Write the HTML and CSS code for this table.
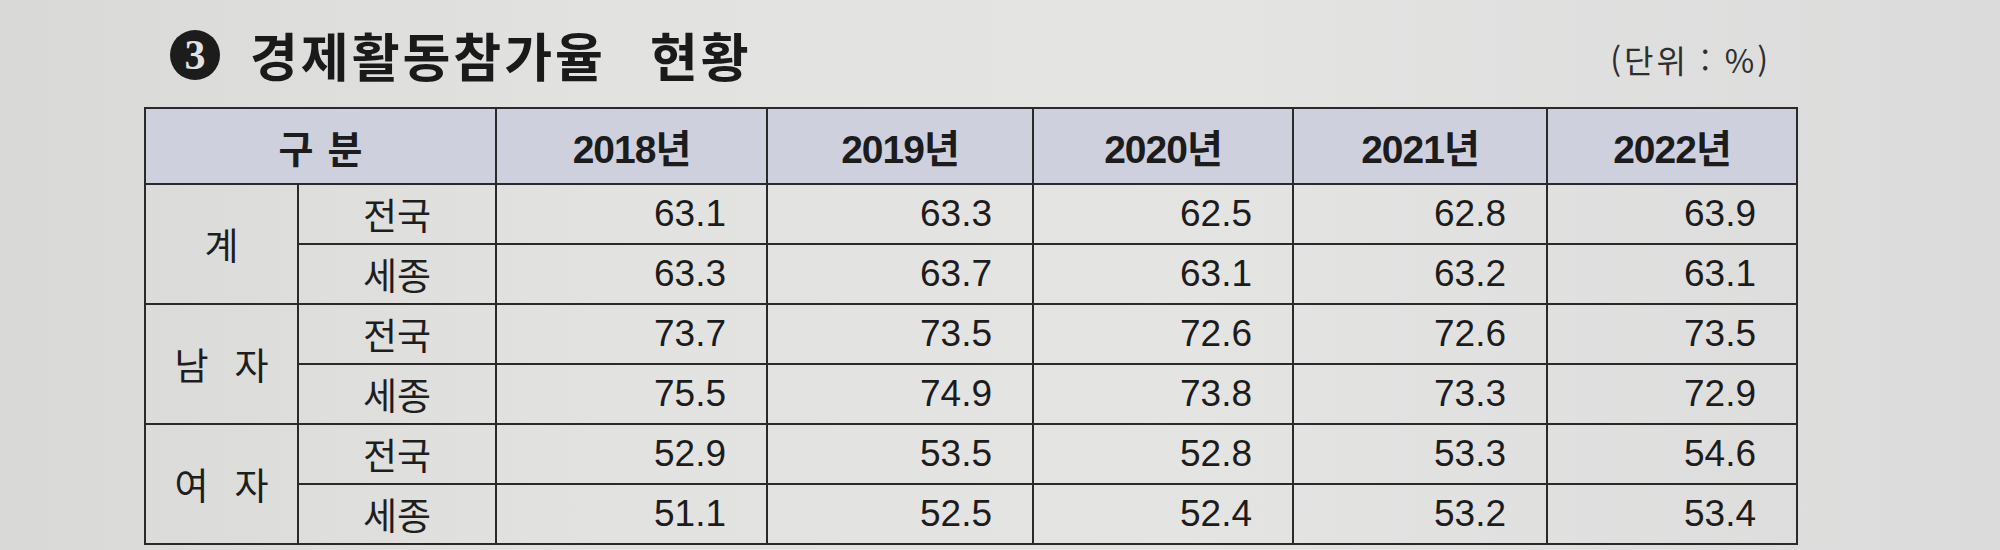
FILE: index.html
```html
<!DOCTYPE html>
<html lang="ko">
<head>
<meta charset="utf-8">
<title>경제활동참가율 현황</title>
<link rel="stylesheet" href="styles.css">
</head>
<body>
<div class="page">
  <header class="heading">
    <h1 class="title">
      <span class="num">3</span>
      <span class="word">경제활동참가율</span>
      <span class="word">현황</span>
    </h1>
    <div class="unit">(단위 : %)</div>
  </header>

  <table class="stats">
    <colgroup>
      <col class="c-group">
      <col class="c-sub">
      <col class="c-y1">
      <col class="c-y2">
      <col class="c-y3">
      <col class="c-y4">
      <col class="c-y5">
    </colgroup>
    <thead>
      <tr>
        <th colspan="2"><span class="spaced tight"><span>구</span><span>분</span></span></th>
        <th>2018년</th>
        <th>2019년</th>
        <th>2020년</th>
        <th>2021년</th>
        <th>2022년</th>
      </tr>
    </thead>
    <tbody>
      <tr>
        <td class="group" rowspan="2">계</td>
        <td class="sub">전국</td>
        <td class="val">63.1</td><td class="val">63.3</td><td class="val">62.5</td><td class="val">62.8</td><td class="val">63.9</td>
      </tr>
      <tr>
        <td class="sub">세종</td>
        <td class="val">63.3</td><td class="val">63.7</td><td class="val">63.1</td><td class="val">63.2</td><td class="val">63.1</td>
      </tr>
      <tr>
        <td class="group" rowspan="2"><span class="spaced"><span>남</span><span>자</span></span></td>
        <td class="sub">전국</td>
        <td class="val">73.7</td><td class="val">73.5</td><td class="val">72.6</td><td class="val">72.6</td><td class="val">73.5</td>
      </tr>
      <tr>
        <td class="sub">세종</td>
        <td class="val">75.5</td><td class="val">74.9</td><td class="val">73.8</td><td class="val">73.3</td><td class="val">72.9</td>
      </tr>
      <tr>
        <td class="group" rowspan="2"><span class="spaced"><span>여</span><span>자</span></span></td>
        <td class="sub">전국</td>
        <td class="val">52.9</td><td class="val">53.5</td><td class="val">52.8</td><td class="val">53.3</td><td class="val">54.6</td>
      </tr>
      <tr>
        <td class="sub">세종</td>
        <td class="val">51.1</td><td class="val">52.5</td><td class="val">52.4</td><td class="val">53.2</td><td class="val">53.4</td>
      </tr>
    </tbody>
  </table>
</div>
</body>
</html>
```

FILE: styles.css
```css
* { box-sizing: border-box; }

html, body {
  margin: 0;
  padding: 0;
}

body {
  width: 2000px;
  height: 550px;
  overflow: hidden;
  background: linear-gradient(90deg, #d9d9d8 0%, #e2e2e1 30%, #e4e4e3 60%, #dbdbdb 100%);
  color: #1c1c1c;
  font-family: "Liberation Sans", "Noto Sans CJK KR", sans-serif;
}

.page {
  padding: 29px 0 0 144px;
}

.heading {
  display: flex;
  justify-content: space-between;
  align-items: flex-start;
  width: 1627px;
  height: 78px;
}

.title {
  margin: 0;
  display: flex;
  align-items: center;
  flex-shrink: 0;
  font-family: "Noto Sans CJK KR", sans-serif;
  font-weight: 700;
  font-size: 52px;
  line-height: 52px;
  letter-spacing: 3px;
  color: #1a1a1a;
  padding-left: 26px;
}

.num {
  display: flex;
  align-items: center;
  justify-content: center;
  flex: 0 0 50px;
  width: 50px;
  height: 50px;
  border-radius: 50%;
  background: #1c1c1c;
  color: #e2e2e2;
  font-family: "Liberation Serif", serif;
  font-size: 42px;
  line-height: 50px;
  font-weight: 700;
  letter-spacing: 0;
  margin-right: 30px;
}

.word + .word {
  margin-left: 44px;
}

.unit {
  margin-top: 14px;
  font-family: "Noto Sans CJK KR", sans-serif;
  font-size: 32px;
  line-height: 32px;
  letter-spacing: 3px;
  color: #2e2e2e;
}

.stats {
  border-collapse: collapse;
  table-layout: fixed;
  width: 1652px;
  background: transparent;
}

.c-group { width: 153px; }
.c-sub { width: 198px; }
.c-y1 { width: 271px; }
.c-y2 { width: 266px; }
.c-y3 { width: 260px; }
.c-y4 { width: 254px; }
.c-y5 { width: 250px; }

.stats th,
.stats td {
  border: 2px solid #2a2a2a;
  padding: 0;
  vertical-align: middle;
}

.stats thead tr { height: 76px; }
.stats tbody tr { height: 60px; }

.stats th {
  background: #cfd0dd;
  font-family: "Liberation Sans", "Noto Sans CJK KR", sans-serif;
  font-weight: 700;
  font-size: 39px;
  letter-spacing: -1px;
  text-align: center;
  color: #1c1c1c;
}

.spaced {
  display: inline-flex;
  gap: 26px;
  font-family: "Noto Sans CJK KR", sans-serif;
  letter-spacing: 0;
}

.spaced.tight {
  gap: 14px;
  font-size: 38px;
}

.group,
.sub {
  text-align: center;
  font-family: "Noto Sans CJK KR", sans-serif;
  font-size: 37px;
  font-weight: 400;
  color: #1e1e1e;
}

.val {
  text-align: right;
  padding-right: 40px !important;
  font-family: "Liberation Sans", sans-serif;
  font-size: 37px;
  color: #1c1c1c;
}
```
